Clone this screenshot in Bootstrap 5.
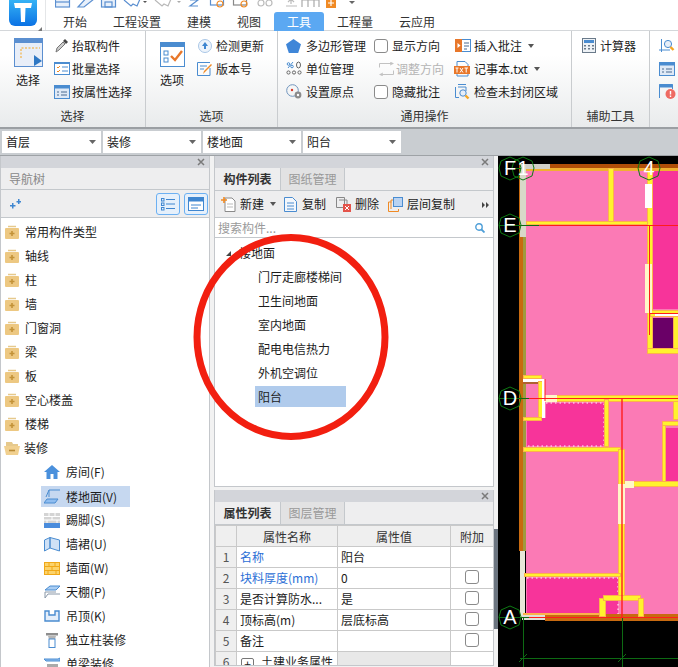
<!DOCTYPE html>
<html lang="zh-CN">
<head>
    <meta charset="UTF-8">
    <meta name="viewport" content="width=device-width, initial-scale=1.0">
    <title>工具</title>
    <link href="https://cdn.jsdelivr.net/npm/bootstrap@5.3.3/dist/css/bootstrap.min.css" rel="stylesheet">
    <style>
        html, body { height: 667px; overflow: hidden; }
        body { font: 12px/14px "Noto Sans CJK SC", "Liberation Sans", sans-serif; color: #1c1c1c; background: #f2f2f2; position: relative; }
        svg { display: block; flex: none; }

        /* title + tabs */
        .app-top { height: 31px; background: #fff; border-bottom: 1px solid #d4d7da; }
        .app-logo { width: 46px; position: relative; border-right: 1px solid #e4e6e8; }
        .app-grip { position: absolute; left: 38px; top: 27px; width: 0; height: 0; border-left: 4px solid transparent; border-bottom: 4px solid #777; }
        .app-qat { height: 11px; overflow: hidden; padding-left: 9px; }
        .app-tabs { height: 19px; flex-wrap: nowrap; padding-left: 4px; margin-top: 1px; }
        .app-tabs .nav-link { padding: 3px 13px 2px; color: #333; font-size: 12px; line-height: 14px; border-radius: 3px 3px 0 0; }
        .app-tabs .nav-link.active { background: #5ba8f2; color: #fff; }

        /* ribbon */
        .rb-wrap { height: 98px; background: linear-gradient(#fff 25%, #e9ebec); border-bottom: 2px solid #9b9fa3; overflow: hidden; }
        .rb-group { height: 96px; border-right: 1px solid #c9cccf; }
        .rb-body { height: 78px; }
        .rb-title { height: 18px; line-height: 14px; text-align: center; color: #333; }
        .rb-big { text-align: center; margin-left: 4px; }
        .rb-big svg { margin: 0 auto 6px; }
        .rb-col { padding-top: 3px; }
        .rb-row { height: 23px; white-space: nowrap; }
        .rb-ic { display: flex; justify-content: center; align-items: center; flex: none; }
        .rb-off { color: #b4b4b4; }
        .rb-caret { display: inline-block; margin-left: 6px; border: 3px solid transparent; border-top: 4px solid #555; border-bottom: 0; vertical-align: 2px; }
        .rb-check { width: 14px; height: 14px; margin: 0; border: 1px solid #8a8a8a; border-radius: 3px; }

        /* floor / type selects */
        .sel-bar { height: 26px; background: #c9cdd1; padding: 2px 0 0 2px; gap: 2px; }
        .sel-bar .form-select { font-size: 12px; line-height: 14px; height: 22px; min-height: 0; padding: 3px 14px 3px 4px; border: 0; border-radius: 0; color: #222; font-family: inherit;
            background-position: right 5px center; background-size: 7px 4px;
            background-image: url("data:image/svg+xml,%3csvg xmlns='http://www.w3.org/2000/svg' viewBox='0 0 7 4'%3e%3cpath d='M0 0h7L3.5 4z' fill='%23666'/%3e%3c/svg%3e"); }

        /* panels */
        .app-main { height: 512px; overflow: hidden; border-top: 1px solid #9ea2a6; }
        .pn-left { width: 210px; border: solid #c4c7cb; border-width: 0 1px; background: #fff; }
        .pn-mid { width: 280px; margin-left: 4px; }
        .pn-box { border: 1px solid #c4c7cb; border-top: 0; background: #fff; }
        .pn-head { height: 12px; background: #d3d5da; display: flex; justify-content: flex-end; align-items: center; padding-right: 4px; }
        .pn-title { height: 22px; line-height: 21px; padding-left: 8px; background: #eeeeef; color: #888; border-bottom: 1px solid #c4c8cc; }
        .pn-tools { height: 28px; background: #eeeeef; border-bottom: 1px solid #c4c8cc; }
        .pn-btn { width: 24px; height: 22px; background: #e6f0fb; border: 1px solid #6cb0f2; border-radius: 3px; display: flex; align-items: center; justify-content: center; }
        .pn-tabs { height: 23px; background: #eeeeef; border-bottom: 1px solid #c4c8cc; flex-wrap: nowrap; }
        .pn-tabs .nav-link { height: 22px; width: 65px; padding: 4px 0 0; text-align: center; font-size: 12px; line-height: 14px; border-radius: 0; color: #333; font-weight: 700; }
        .pn-tabs .nav-link.off { width: 65px; background: #e2e2e3; color: #999; font-weight: 400; border-left: 1px solid #c4c8cc; border-right: 1px solid #c4c8cc; }

        /* nav tree */
        .nav-tree { padding-top: 2px; }
        .tree-row { height: 24px; padding-left: 4px; white-space: nowrap; }
        .tree-row svg { margin-right: 6px; }
        .tree-sub { height: 24px; margin-left: 40px; width: 89px; padding-left: 3px; white-space: nowrap; }
        .tree-sub svg { margin-right: 6px; }
        .tree-sub.on { background: #c6d8f0; height: 21px; margin-top: 2px; margin-bottom: 1px; }

        /* component list */
        .list-search { height: 20px; padding: 0 8px 0 3px; border-bottom: 1px solid #c4c8cc; color: #9a9a9a; }
        .list-area { height: 248px; overflow: hidden; }
        .list-root { height: 24px; margin-top: 3px; padding-left: 11px; }
        .list-tri { width: 0; height: 0; border-left: 5px solid transparent; border-bottom: 5px solid #444; margin-right: 8px; }
        .list-item { height: 24px; line-height: 24px; padding-left: 43px; }
        .list-item.on span { display: block; margin-top: 1px; margin-left: -3px; padding-left: 3px; width: 91px; height: 21px; line-height: 21px; background: #b0cbec; }

        /* property table */
        .pn-prop { height: 176px; margin-top: 3px; overflow: hidden; }
        .table.prop-tb { width: 278px; margin: 0; table-layout: fixed; border-color: #c9c9c9; font-size: 12px; }
        .table.prop-tb > * > * > * { padding: 0 0 0 3px; height: 21px; line-height: 19px; border: 1px solid #c9c9c9; box-shadow: none; white-space: nowrap; overflow: hidden; color: #1c1c1c; }
        .table.prop-tb th { background: #efefef; font-weight: 400; text-align: center; color: #333; padding-left: 0; }
        .table.prop-tb .prop-n { background: #efefef; text-align: center; padding: 0; color: #555; }
        .table.prop-tb .prop-blue { color: #2c6fd6; }
        .table.prop-tb .prop-grey { background: #e8e8e8; }
        .table.prop-tb .prop-c { padding: 2px 0 0; }
        .prop-plus { display: inline-flex; width: 13px; height: 13px; border: 1px solid #777; border-radius: 2px; align-items: center; justify-content: center; line-height: 10px; margin: 0 7px 0 1px; vertical-align: -2px; }

        /* splitter + canvas */
        .app-split { width: 4px; position: relative; background: #f2f2f2; }
        .app-split i { position: absolute; left: 0; top: 373px; width: 4px; height: 100px; background: #6c7580; }
        .cad-view { width: 180px; background: #000; }
        .cad-wall { fill: #fff22e; stroke: #fcb24a; stroke-width: 1; }
        .cad-tag { fill: #fff; font: 20px "Liberation Sans", sans-serif; text-anchor: middle; }
        .cad-hex { fill: none; stroke: #0d7a13; stroke-width: 1; }
        .app-ring { position: absolute; left: 0; top: 0; pointer-events: none; }
    </style>
</head>
<body>

<svg width="0" height="0" class="position-absolute">
    <symbol id="fd" viewBox="0 0 14 14">
        <path d="M3 1.500h8" stroke="#e6c98c" stroke-width="1.500"/>
        <rect y="3" width="14" height="11" rx="1" fill="#edc882"/>
        <path d="M7 6v5M4.500 8.500h5" stroke="#c39238" stroke-width="1.600"/>
    </symbol>
    <symbol id="cl" viewBox="0 0 8 8">
        <path d="M1 1l6 6M7 1L1 7" stroke="#7a7a7a" stroke-width="1.500"/>
    </symbol>
</svg>

<!-- tabs -->
<div class="app-top d-flex">
    <div class="app-logo">
        <svg width="28" height="26" viewBox="0 0 28 26" style="margin-left:9px">
            <defs><linearGradient id="lg" x1="0" y1="0" x2="0" y2="1"><stop offset="0" stop-color="#35b2f5"/><stop offset="1" stop-color="#0b72e4"/></linearGradient></defs>
            <path d="M0 0h28v20a6 6 0 0 1-6 6H6a6 6 0 0 1-6-6z" fill="url(#lg)"/>
            <path d="M5 3h18l-1 5h-5.500l-.5 14h-4l-.5-14H6z" fill="#fff"/>
        </svg>
        <span class="app-grip"></span>
    </div>
    <div class="flex-grow-1">
        <div class="app-qat">
            <svg width="310" height="11" viewBox="0 0 310 11" fill="none" stroke-width="1.200">
                <rect x=".5" y="-8" width="14" height="15" stroke="#5b8fd0" fill="#e8f0fa"/><path d="M0 2h15" stroke="#5b8fd0"/>
                <path d="M23 7l11-12 5 4-10 8z" stroke="#5b8fd0" fill="#e8f0fa"/>
                <rect x="46.500" y="-8" width="14" height="15" stroke="#5b8fd0" fill="#e8f0fa"/><rect x="50" y="2" width="7" height="5" stroke="#5b8fd0"/>
                <path d="M69 0l7 6 2-2 4 2 3-7" stroke="#5b8fd0"/>
                <path d="M88 1h4l-2 2z" fill="#555" stroke="none"/>
                <path d="M100 0l7 6 2-2 4 2 3-7" stroke="#b8b8b8"/>
                <path d="M122 1h4l-2 2z" fill="#aaa" stroke="none"/>
                <path d="M135 0h8l-8 6h8" stroke="#5b8fd0"/>
                <rect x="155.500" y="-5" width="13" height="10" stroke="#5b8fd0"/><circle cx="165" cy="4" r="3" stroke="#f08a24"/>
                <rect x="178.500" y="-5" width="13" height="10" stroke="#888"/><circle cx="189" cy="4" r="3" stroke="#f08a24"/>
                <circle cx="206" cy="3" r="3" stroke="#bbb"/><circle cx="214" cy="3" r="3" stroke="#bbb"/>
                <path d="M236 4v-5m-3 3l3-3 3 3M231 6h11" stroke="#bbb"/>
                <path d="M247 7V0h17v7M253 0v7M259 0v7" stroke="#aaa"/>
                <rect x="271" y="-2" width="10" height="10" fill="#f08a24" stroke="none"/><path d="M276 0v6M273 3h6" stroke="#fff"/>
                <path d="M294 1h6l-3 3z" fill="#666" stroke="none"/>
            </svg>
        </div>
        <ul class="nav app-tabs">
            <li class="nav-item"><a class="nav-link" href="#">开始</a></li>
            <li class="nav-item"><a class="nav-link" href="#">工程设置</a></li>
            <li class="nav-item"><a class="nav-link" href="#">建模</a></li>
            <li class="nav-item"><a class="nav-link" href="#">视图</a></li>
            <li class="nav-item"><a class="nav-link active" href="#">工具</a></li>
            <li class="nav-item"><a class="nav-link" href="#">工程量</a></li>
            <li class="nav-item"><a class="nav-link" href="#">云应用</a></li>
        </ul>
    </div>
</div>

<!-- ribbon -->
<div class="rb-wrap d-flex">
    <div class="rb-group" style="width:146px">
        <div class="rb-body d-flex">
            <div class="rb-big" style="width:48px;padding-top:7px">
                <svg width="29" height="29" viewBox="0 0 29 29">
                    <rect x=".5" y=".5" width="28" height="28" fill="#e8eef8" stroke="#5b8fd0"/>
                    <rect width="29" height="5" fill="#5b8fd0"/>
                    <path d="M7 20V10h19" fill="none" stroke="#f5a623" stroke-dasharray="2 1.500"/>
                    <path d="M20 17l8 6-8 5z" fill="#2f78c4"/>
                </svg>
                选择
            </div>
            <div class="rb-col">
                <div class="rb-row d-flex align-items-center"><span class="rb-ic" style="width:20px">
                    <svg width="14" height="15" viewBox="0 0 14 15"><path d="M1 14l1-4 6-6 2 2-6 6z" fill="#ccc" stroke="#777"/><path d="M8 3l2-2 3 3-2 2z" fill="#444"/></svg></span>抬取构件</div>
                <div class="rb-row d-flex align-items-center"><span class="rb-ic" style="width:20px">
                    <svg width="16" height="13" viewBox="0 0 16 13" fill="none"><rect x=".5" y=".5" width="15" height="12" fill="#fff" stroke="#4a8cd0"/><path d="M0 1h16" stroke="#4a8cd0" stroke-width="2"/><path d="M3 5l1 1 2-2M3 9l1 1 2-2" stroke="#f08a24"/><path d="M8 5h6M8 9h6" stroke="#4a8cd0"/></svg></span>批量选择</div>
                <div class="rb-row d-flex align-items-center"><span class="rb-ic" style="width:20px">
                    <svg width="16" height="14" viewBox="0 0 16 14" fill="none"><rect x=".5" y=".5" width="15" height="13" fill="#dfe9f6" stroke="#4a8cd0"/><path d="M0 2h16" stroke="#4a8cd0" stroke-width="3"/><path d="M3 7h2M3 10h2M7 7h6M7 10h6" stroke="#4a6a90"/></svg></span>按属性选择</div>
            </div>
        </div>
        <div class="rb-title">选择</div>
    </div>

    <div class="rb-group" style="width:132px">
        <div class="rb-body d-flex">
            <div class="rb-big" style="width:44px;padding-top:11px">
                <svg width="25" height="25" viewBox="0 0 25 25" fill="none">
                    <rect x=".5" y=".5" width="24" height="24" fill="#fff" stroke="#4a8cd0"/>
                    <rect width="25" height="5" fill="#4a8cd0"/>
                    <rect x="4" y="9" width="4" height="4" stroke="#4a8cd0"/><rect x="4" y="16" width="4" height="4" stroke="#4a8cd0"/>
                    <path d="M11 14l4 4 7-9" stroke="#e8772a" stroke-width="2.400"/>
                </svg>
                选项
            </div>
            <div class="rb-col">
                <div class="rb-row d-flex align-items-center"><span class="rb-ic" style="width:22px">
                    <svg width="14" height="14" viewBox="0 0 14 14"><circle cx="7" cy="7" r="6.500" fill="#eef4fb" stroke="#a9c6e6"/><path d="M7 3l3 4H8v3H6V7H4z" fill="#3f86d0"/></svg></span>检测更新</div>
                <div class="rb-row d-flex align-items-center"><span class="rb-ic" style="width:22px">
                    <svg width="16" height="14" viewBox="0 0 16 14" fill="none"><path d="M13 6v7.500H.5V.5H13" stroke="#4a8cd0"/><path d="M3 4h7M3 7h4" stroke="#4a8cd0"/><path d="M6 12l1-3 7-7 1 1-7 7z" fill="#f08a24"/></svg></span>版本号</div>
            </div>
        </div>
        <div class="rb-title">选项</div>
    </div>

    <div class="rb-group" style="width:294px">
        <div class="rb-body d-flex">
            <div class="rb-col" style="width:96px;padding-left:8px">
                <div class="rb-row d-flex align-items-center"><span class="rb-ic" style="width:20px;justify-content:flex-start">
                    <svg width="15" height="14" viewBox="0 0 15 14"><path d="M7.500 0L15 5.300 12.200 14H2.800L0 5.300z" fill="#3f86d8"/></svg></span>多边形管理</div>
                <div class="rb-row d-flex align-items-center"><span class="rb-ic" style="width:20px;justify-content:flex-start">
                    <svg width="17" height="15" viewBox="0 0 17 15" fill="none" stroke="#666"><circle cx="2.500" cy="3" r="1.300" stroke="#4a8cd0"/><path d="M2 7l5-6" stroke="#4a8cd0"/><circle cx="6" cy="5.500" r="1.300" stroke="#4a8cd0"/><ellipse cx="12.500" cy="4" rx="2" ry="3"/><circle cx="2.500" cy="11.500" r="1.600"/><circle cx="8" cy="11.500" r="1.600"/><circle cx="13.500" cy="11.500" r="1.600"/></svg></span>单位管理</div>
                <div class="rb-row d-flex align-items-center"><span class="rb-ic" style="width:20px;justify-content:flex-start">
                    <svg width="17" height="16" viewBox="0 0 17 16" fill="none"><circle cx="6.500" cy="6.500" r="5.800" stroke="#6f94bd"/><circle cx="6" cy="6" r="1.200" fill="#d8392b"/><circle cx="12" cy="11" r="3.400" fill="#8b8b8b"/><circle cx="12" cy="11" r="1.200" fill="#fff"/></svg></span>设置原点</div>
            </div>
            <div class="rb-col" style="width:79px">
                <div class="rb-row d-flex align-items-center"><span class="rb-ic justify-content-start" style="width:18px"><input class="form-check-input rb-check" type="checkbox"></span>显示方向</div>
                <div class="rb-row d-flex align-items-center rb-off"><span class="rb-ic" style="width:22px;padding-left:3px">
                    <svg width="15" height="14" viewBox="0 0 15 14" fill="none" stroke="#c2c2c2"><path d="M.5 5.500V1.500h14M14.500 8.500v4H.5"/><path d="M11 0l3 1.500-3 1.500M4 11l-3 1.500L4 14"/></svg></span>调整方向</div>
                <div class="rb-row d-flex align-items-center"><span class="rb-ic justify-content-start" style="width:18px"><input class="form-check-input rb-check" type="checkbox"></span>隐藏批注</div>
            </div>
            <div class="rb-col">
                <div class="rb-row d-flex align-items-center"><span class="rb-ic" style="width:21px;justify-content:flex-start;padding-left:2px">
                    <svg width="16" height="13" viewBox="0 0 16 13" fill="none"><rect x=".5" y=".5" width="15" height="12" fill="#fff" stroke="#4a8cd0"/><rect width="7" height="13" fill="#e8772a"/><path d="M2.500 4l3 2.500-3 2.500z" fill="#fff"/><path d="M9 4h5M9 7h5M9 10h3" stroke="#4a6a90"/></svg></span>插入批注<span class="rb-caret"></span></div>
                <div class="rb-row d-flex align-items-center"><span class="rb-ic" style="width:21px;justify-content:flex-start;padding-left:1px">
                    <svg width="16" height="16" viewBox="0 0 16 16" fill="none"><path d="M3 5V.5h8l3 3V15H3v-2" stroke="#4a8cd0"/><rect y="5" width="16" height="8" fill="#e8772a"/><path d="M1.500 7h3M3 7v4.500M6 7l3 4.500M9 7l-3 4.500M10.500 7h3.500M12.200 7v4.500" stroke="#fff"/></svg></span>记事本.txt<span class="rb-caret"></span></div>
                <div class="rb-row d-flex align-items-center"><span class="rb-ic" style="width:21px;justify-content:flex-start;padding-left:2px">
                    <svg width="15" height="16" viewBox="0 0 15 16" fill="none"><path d="M3 .5h8M.5 3v10.500H4" stroke="#4a8cd0"/><path d="M3 3h8v4" stroke="#4a8cd0"/><circle cx="8" cy="9" r="3.200" fill="#e6eef8" stroke="#4a8cd0"/><path d="M10.500 11.500l3 3" stroke="#f5a623" stroke-width="2.400"/></svg></span>检查未封闭区域</div>
            </div>
        </div>
        <div class="rb-title">通用操作</div>
    </div>

    <div class="rb-group" style="width:78px">
        <div class="rb-body rb-col" style="padding-left:10px">
            <div class="rb-row d-flex align-items-center"><span class="rb-ic justify-content-start" style="width:18px">
                <svg width="14" height="15" viewBox="0 0 14 15" fill="none"><rect x=".5" y=".5" width="13" height="14" fill="#eef2f6" stroke="#6a7a8a"/><rect x="2" y="2" width="10" height="3" fill="#4a8cd0"/><path d="M2 7h2v1.500H2zm4 0h2v1.500H6zm4 0h2v1.500h-2zM2 10h2v1.500H2zm4 0h2v1.500H6zm4 0h2v1.500h-2z" fill="#6a7a8a"/></svg></span>计算器</div>
        </div>
        <div class="rb-title">辅助工具</div>
    </div>

    <div class="rb-col" style="padding-left:9px">
        <div class="rb-row d-flex align-items-center">
            <svg width="17" height="15" viewBox="0 0 17 15" fill="none"><path d="M2.500 1v13M0 12h11" stroke="#4a8cd0"/><circle cx="9" cy="6" r="3.600" fill="#e6eef8" stroke="#4a8cd0"/><path d="M11.500 9l3 3" stroke="#f5a623" stroke-width="2.400"/></svg></div>
        <div class="rb-row d-flex align-items-center">
            <svg width="16" height="14" viewBox="0 0 16 14" fill="none"><rect x=".5" y=".5" width="15" height="13" fill="#dfe9f6" stroke="#4a8cd0"/><path d="M0 2h16" stroke="#4a8cd0" stroke-width="3"/><path d="M3 7h2M3 10h2M7 7h6M7 10h6" stroke="#4a6a90"/></svg></div>
        <div class="rb-row d-flex align-items-center">
            <svg width="17" height="15" viewBox="0 0 17 15" fill="none"><path d="M.5 14V.5h13V5" stroke="#4a8cd0"/><path d="M0 2h14" stroke="#4a8cd0" stroke-width="3"/><circle cx="11.500" cy="10" r="5" fill="#ee6a62"/><path d="M11.500 7v3.500M11.500 11.500v1.500" stroke="#fff" stroke-width="1.400"/></svg></div>
    </div>
</div>

<!-- selects -->
<div class="sel-bar d-flex">
    <select class="form-select" style="width:99px"><option>首层</option></select>
    <select class="form-select" style="width:98px"><option>装修</option></select>
    <select class="form-select" style="width:98px"><option>楼地面</option></select>
    <select class="form-select" style="width:98px"><option>阳台</option></select>
</div>

<div class="app-main d-flex">
    <!-- navigation tree -->
    <div class="pn-left">
        <div class="pn-head"><svg width="8" height="8"><use href="#cl"/></svg></div>
        <div class="pn-title">导航树</div>
        <div class="pn-tools d-flex align-items-center justify-content-between" style="padding:0 1px 0 7px">
            <svg width="13" height="10" viewBox="0 0 13 10" fill="#3f86d0"><path d="M2 6h2V4h1.500v2h2v1.500h-2v2H4v-2H2zM8.500 2h1.500V0h1.500v2H13v1.500h-1.500V5H10V3.500H8.500z"/></svg>
            <div class="d-flex gap-1">
                <span class="pn-btn"><svg width="14" height="14" viewBox="0 0 14 14" fill="none" stroke="#3f86d0"><rect x=".5" y="1.500" width="2.500" height="2.500"/><rect x=".5" y="6" width="2.500" height="2.500"/><rect x=".5" y="10.500" width="2.500" height="2.500"/><path d="M5 2.500h9M5 7h9M5 11.500h9"/></svg></span>
                <span class="pn-btn"><svg width="16" height="14" viewBox="0 0 16 14" fill="none"><rect x=".5" y=".5" width="15" height="13" fill="#fff" stroke="#3f86d0"/><path d="M0 2.500h16" stroke="#3f86d0" stroke-width="4"/><path d="M3 8h10M3 11h7" stroke="#3f86d0"/></svg></span>
            </div>
        </div>
        <div class="nav-tree">
            <div class="tree-row d-flex align-items-center"><svg width="14" height="14"><use href="#fd"/></svg>常用构件类型</div>
            <div class="tree-row d-flex align-items-center"><svg width="14" height="14"><use href="#fd"/></svg>轴线</div>
            <div class="tree-row d-flex align-items-center"><svg width="14" height="14"><use href="#fd"/></svg>柱</div>
            <div class="tree-row d-flex align-items-center"><svg width="14" height="14"><use href="#fd"/></svg>墙</div>
            <div class="tree-row d-flex align-items-center"><svg width="14" height="14"><use href="#fd"/></svg>门窗洞</div>
            <div class="tree-row d-flex align-items-center"><svg width="14" height="14"><use href="#fd"/></svg>梁</div>
            <div class="tree-row d-flex align-items-center"><svg width="14" height="14"><use href="#fd"/></svg>板</div>
            <div class="tree-row d-flex align-items-center"><svg width="14" height="14"><use href="#fd"/></svg>空心楼盖</div>
            <div class="tree-row d-flex align-items-center"><svg width="14" height="14"><use href="#fd"/></svg>楼梯</div>
            <div class="tree-row d-flex align-items-center">
                <svg width="16" height="14" viewBox="0 0 16 14" style="margin:0 4px 0 -1px"><path d="M2 3V1h6l1 2h5v2H2z" fill="#e6c98c"/><path d="M0 5h16l-2 9H2z" fill="#f1d08f"/><path d="M5 9.500h6" stroke="#b98a34" stroke-width="1.600"/></svg>装修</div>
            <div class="tree-sub d-flex align-items-center">
                <svg width="16" height="16" viewBox="0 0 16 16"><path d="M8 1L0 8h2.500v7h4v-5h3v5h4V8H16z" fill="#4a90dc"/></svg>房间(F)</div>
            <div class="tree-sub on d-flex align-items-center">
                <svg width="16" height="15" viewBox="0 0 16 15" fill="none" stroke="#4a8cd0"><path d="M5 8V1h11M5 1L2 8"/><path d="M3 10h11l-3 4H0z" fill="#8fbdf0"/></svg>楼地面(V)</div>
            <div class="tree-sub d-flex align-items-center">
                <svg width="16" height="15" viewBox="0 0 16 15"><rect width="16" height="10" fill="#d4d4d4"/><path d="M0 3.500h16M0 7h16M5 0v3.500M11 0v3.500M8 3.500V7M3 7v3M13 7v3" stroke="#fff"/><rect y="10" width="16" height="5" fill="#4a8cdc"/></svg>踢脚(S)</div>
            <div class="tree-sub d-flex align-items-center">
                <svg width="16" height="15" viewBox="0 0 16 15"><path d="M.5 3L6 .5V11l-5.500 3zM6 .5L15.500 3v11L6 11z" fill="#cfe1f6" stroke="#4a8cd0"/></svg>墙裙(U)</div>
            <div class="tree-sub d-flex align-items-center">
                <svg width="16" height="13" viewBox="0 0 16 13"><rect x=".5" y=".5" width="15" height="12" fill="#fcd36b" stroke="#f0a818"/><path d="M0 4.500h16M0 8.500h16M5 .5v4M11 .5v4M8 4.500v4M4 8.500v4M12 8.500v4" stroke="#f0a818"/></svg>墙面(W)</div>
            <div class="tree-sub d-flex align-items-center">
                <svg width="16" height="15" viewBox="0 0 16 15" fill="none"><path d="M1 5l5-4h10l-4 4z" fill="#a9cdf3" stroke="#4a8cd0"/><path d="M1 7h11M1 7v6M1 13l3-4h12" stroke="#8a98a8"/></svg>天棚(P)</div>
            <div class="tree-sub d-flex align-items-center">
                <svg width="16" height="12" viewBox="0 0 16 12" fill="none"><path d="M1 1v10h14V1h-4v4H5V1z" fill="#e4eefa" stroke="#4a8cd0" stroke-width="1.400"/></svg>吊顶(K)</div>
            <div class="tree-sub d-flex align-items-center" style="width:160px">
                <svg width="16" height="15" viewBox="0 0 16 15"><path d="M2 0h12v2.500H2z" fill="#8e8e8e"/><path d="M4 3h8l-1 3H5z" fill="#b5b5b5"/><rect x="5" y="6" width="6" height="8.500" fill="#fff" stroke="#4a8cd0"/></svg>独立柱装修</div>
            <div class="tree-sub d-flex align-items-center" style="width:160px">
                <svg width="16" height="15" viewBox="0 0 16 15" fill="none"><path d="M0 2h14l2-1v3H2z" fill="#8fbdf0" stroke="#4a8cd0"/><path d="M3 7h11v3H3z" fill="#aaa"/></svg>单梁装修</div>
        </div>
    </div>

    <div class="pn-mid d-flex flex-column">
        <!-- component list -->
        <div class="pn-box">
            <div class="pn-head"><svg width="8" height="8"><use href="#cl"/></svg></div>
            <ul class="nav pn-tabs">
                <li class="nav-item"><a class="nav-link" href="#">构件列表</a></li>
                <li class="nav-item"><a class="nav-link off" href="#">图纸管理</a></li>
            </ul>
            <div class="pn-tools d-flex align-items-center position-relative" style="height:27px;padding-left:6px">
                <svg width="15" height="15" viewBox="0 0 15 15" fill="none"><path d="M4 1h7l3 3v10.500H4z" fill="#fff" stroke="#8a8a8a"/><path d="M6 7h6M6 10h6" stroke="#bbb"/><path d="M3 0v6M0 3h6" stroke="#f08a24" stroke-width="1.600"/></svg>
                <span class="ms-1">新建</span><span class="rb-caret"></span>
                <svg class="ms-2" width="13" height="15" viewBox="0 0 13 15" fill="none" stroke="#4a8cd0"><path d="M.5.5h8l4 4v10H.5z" fill="#f3f7fc"/><path d="M3 6h7M3 9h7M3 12h7"/></svg>
                <span style="margin-left:5px">复制</span>
                <svg style="margin-left:10px" width="15" height="15" viewBox="0 0 15 15" fill="none"><path d="M.5.5h8v10H.5z" stroke="#888"/><path d="M3 3h8v4" stroke="#888"/><rect x="7" y="7" width="8" height="8" fill="#e4534a"/><path d="M9 9l4 4M13 9l-4 4" stroke="#fff"/></svg>
                <span style="margin-left:4px">删除</span>
                <svg style="margin-left:9px" width="15" height="15" viewBox="0 0 15 15" fill="none"><path d="M.5 14.500V5h3M.5 14.500h10V12" stroke="#f08a24"/><path d="M3 12V3h3" stroke="#f08a24"/><rect x="5.500" y=".5" width="9" height="9" fill="#b9d3f2" stroke="#4a8cd0"/></svg>
                <span style="margin-left:4px">层间复制</span>
                <svg class="position-absolute" style="right:4px;top:11px" width="7" height="6" viewBox="0 0 7 6" fill="#444"><path d="M0 0l3 3-3 3zM4 0l3 3-3 3z"/></svg>
            </div>
            <div class="list-search d-flex align-items-center justify-content-between">
                <span>搜索构件...</span>
                <svg width="10" height="10" viewBox="0 0 10 10" fill="none" stroke="#4f9fd8"><circle cx="4" cy="4" r="3.200" stroke-width="1.400"/><path d="M6.500 6.500l3 3" stroke-width="1.800"/></svg>
            </div>
            <div class="list-area">
                <div class="list-root d-flex align-items-center"><span class="list-tri"></span>楼地面</div>
                <div class="list-item">门厅走廊楼梯间</div>
                <div class="list-item">卫生间地面</div>
                <div class="list-item">室内地面</div>
                <div class="list-item">配电电信热力</div>
                <div class="list-item">外机空调位</div>
                <div class="list-item on"><span>阳台</span></div>
            </div>
        </div>
        <!-- properties -->
        <div class="pn-box pn-prop">
            <div class="pn-head"><svg width="8" height="8"><use href="#cl"/></svg></div>
            <ul class="nav pn-tabs">
                <li class="nav-item"><a class="nav-link" href="#">属性列表</a></li>
                <li class="nav-item"><a class="nav-link off" href="#">图层管理</a></li>
            </ul>
            <table class="table table-bordered prop-tb">
                <colgroup><col style="width:21px"><col style="width:101px"><col style="width:113px"><col style="width:43px"></colgroup>
                <thead><tr><th></th><th>属性名称</th><th>属性值</th><th>附加</th></tr></thead>
                <tbody>
                    <tr><td class="prop-n">1</td><td class="prop-blue">名称</td><td>阳台</td><td></td></tr>
                    <tr><td class="prop-n">2</td><td class="prop-blue">块料厚度(mm)</td><td>0</td><td class="prop-c"><input class="form-check-input rb-check d-block mx-auto" type="checkbox"></td></tr>
                    <tr><td class="prop-n">3</td><td>是否计算防水...</td><td>是</td><td class="prop-c"><input class="form-check-input rb-check d-block mx-auto" type="checkbox"></td></tr>
                    <tr><td class="prop-n">4</td><td>顶标高(m)</td><td>层底标高</td><td class="prop-c"><input class="form-check-input rb-check d-block mx-auto" type="checkbox"></td></tr>
                    <tr><td class="prop-n">5</td><td>备注</td><td></td><td class="prop-c"><input class="form-check-input rb-check d-block mx-auto" type="checkbox"></td></tr>
                    <tr><td class="prop-n">6</td><td><span class="prop-plus">+</span>土建业务属性</td><td class="prop-grey"></td><td></td></tr>
                </tbody>
            </table>
        </div>
    </div>

    <div class="app-split"><i></i></div>

    <!-- drawing -->
    <div class="cad-view">
        <svg width="180" height="512" viewBox="498 155 180 512">
            <rect x="526" y="168" width="152" height="450" fill="#fb7ab5"/>
            <!-- rooms -->
            <rect x="653" y="170" width="25" height="138" fill="#f7349a"/>
            <rect x="653" y="317" width="20" height="30" fill="#6a0067"/>
            <path d="M546 402h58v43h-77v-28h19z" fill="#f7349a"/>
            <path d="M546 402h58v43h-77" fill="none" stroke="#fff" stroke-dasharray="1.500 3"/>
            <rect x="666" y="427" width="12" height="53" fill="#f7349a"/>
            <rect x="527" y="577" width="91" height="36" fill="#f7349a"/>
            <path d="M527 577h91v36" fill="none" stroke="#fff" stroke-dasharray="1.500 3"/>
            <!-- outer wall -->
            <rect x="519" y="163" width="7" height="387" fill="#c86a10"/>
            <rect x="523" y="163" width="3" height="387" fill="#a09a40"/>
            <rect x="519" y="163" width="159" height="4" fill="#b04e08"/>
            <rect x="526" y="167" width="152" height="3" fill="#f0b030"/>
            <rect x="520" y="163" width="30" height="5" fill="#d0d0c8"/>
            <rect x="520" y="163" width="6" height="73" fill="#d8d8c8"/>
            <rect x="520" y="550" width="5" height="66" fill="#e8e8d8"/>
            <rect x="545" y="613" width="133" height="7" fill="#c86a10"/>
            <rect x="522" y="613" width="23" height="6" fill="#e0e0d8"/>
            <!-- inner walls -->
            <rect class="cad-wall" x="608.500" y="167.500" width="5" height="54"/>
            <rect class="cad-wall" x="526.500" y="220.500" width="122" height="3"/>
            <rect class="cad-wall" x="647.500" y="170.500" width="5" height="182"/>
            <rect class="cad-wall" x="647.500" y="347.500" width="31" height="5"/>
            <rect class="cad-wall" x="650.500" y="309.500" width="28" height="6"/>
            <rect class="cad-wall" x="673.500" y="315.500" width="5" height="32"/>
            <rect x="645" y="183" width="7" height="24" fill="#fff"/>
            <rect x="645" y="263" width="7" height="49" fill="#fff8c8"/>
            <rect x="655" y="313" width="23" height="2" fill="#fff"/>
            <rect class="cad-wall" x="523.500" y="374.500" width="18" height="3"/>
            <rect x="523" y="378" width="19" height="3" fill="#fff"/>
            <rect x="523" y="381" width="18" height="2" fill="#b06030"/>
            <rect class="cad-wall" x="523.500" y="416.500" width="18" height="3"/>
            <rect class="cad-wall" x="538.500" y="380.500" width="6" height="36"/>
            <rect x="542" y="378" width="3" height="39" fill="#fff"/>
            <rect class="cad-wall" x="545.500" y="394.500" width="133" height="6"/>
            <rect x="545" y="394" width="12" height="7" fill="#fff8c8"/>
            <rect class="cad-wall" x="604.500" y="398.500" width="4" height="47"/>
            <rect class="cad-wall" x="673.500" y="400.500" width="5" height="18"/>
            <rect class="cad-wall" x="523.500" y="446.500" width="97" height="4"/>
            <rect class="cad-wall" x="618.500" y="448.500" width="6" height="148"/>
            <rect x="618" y="483" width="7" height="40" fill="#fff8c8"/>
            <rect class="cad-wall" x="662.500" y="420.500" width="3" height="60"/>
            <rect class="cad-wall" x="662.500" y="420.500" width="16" height="4"/>
            <rect class="cad-wall" x="625.500" y="480.500" width="53" height="5"/>
            <rect x="625" y="480" width="9" height="7" fill="#fff8c8"/>
            <rect class="cad-wall" x="524.500" y="572.500" width="96" height="3"/>
            <rect class="cad-wall" x="523.500" y="612.500" width="75" height="1"/>
            <rect class="cad-wall" x="599.500" y="597.500" width="6" height="18"/>
            <rect class="cad-wall" x="603.500" y="594.500" width="37" height="5"/>
            <rect class="cad-wall" x="638.500" y="597.500" width="5" height="18"/>
            <!-- red axis lines -->
            <g stroke="#ff1c1c" fill="none">
                <path d="M526 224.500h152M649.500 224v110M649.500 312.500H678M523 397.500h155M545 378v22"/>
                <path d="M622 398v219" stroke-width="2" stroke-opacity=".7"/>
                <path d="M526 616.500h152"/>
            </g>
            <!-- green axis lines + bubbles -->
            <g stroke="#0d6a13" fill="none">
                <path d="M523.500 617v50M622.500 617v50M520 657.500h158M519 661l8-8M618 661l8-8M505 167.500h16M499 224.500h40M499 397.500h30M499 616.500h30"/>
            </g>
            <polygon class="cad-hex" points="510,156 519,160 521,167 519,175 510,179 501,175 499,167 501,160"/>
            <polygon class="cad-hex" points="523,156 532,160 534,167 532,175 523,179 514,175 512,167 514,160"/>
            <polygon class="cad-hex" points="649,156 658,160 660,167 658,175 649,179 640,175 638,167 640,160"/>
            <polygon class="cad-hex" points="510,213 519,217 521,224 519,232 510,236 501,232 499,224 501,217"/>
            <polygon class="cad-hex" points="510,386 519,390 521,397 519,405 510,409 501,405 499,397 501,390"/>
            <polygon class="cad-hex" points="510,605 519,609 521,616 519,624 510,628 501,624 499,616 501,609"/>
            <text class="cad-tag" x="510" y="174">F</text>
            <text class="cad-tag" x="523" y="174">1</text>
            <text class="cad-tag" x="649" y="174">4</text>
            <text class="cad-tag" x="510" y="231">E</text>
            <text class="cad-tag" x="510" y="404">D</text>
            <text class="cad-tag" x="510" y="623">A</text>
        </svg>
    </div>
</div>

<!-- red marker drawn over the component list -->
<svg class="app-ring" width="678" height="667"><ellipse cx="291" cy="337" rx="94" ry="99.500" fill="none" stroke="#f21f10" stroke-width="7"/></svg>

<script src="https://cdn.jsdelivr.net/npm/bootstrap@5.3.3/dist/js/bootstrap.bundle.min.js"></script>
</body>
</html>
